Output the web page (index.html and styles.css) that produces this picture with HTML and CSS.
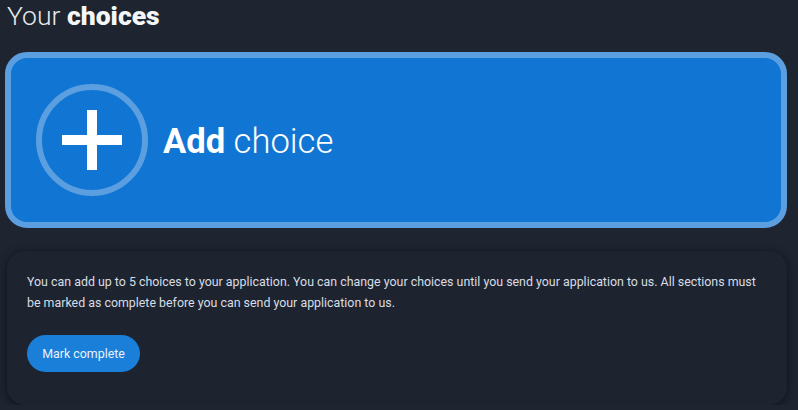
FILE: index.html
```html
<!DOCTYPE html>
<html lang="en">
<head>
<meta charset="utf-8">
<title>Your choices</title>
<link rel="stylesheet" href="styles.css">
</head>
<body>
<main class="page">
  <h1 class="title"><span class="light">Your</span> <strong>choices</strong></h1>
  <button class="add-card" type="button">
    <span class="plus-ring">
      <svg class="plus" viewBox="0 0 60 60" width="60" height="60" aria-hidden="true">
        <rect x="0" y="25" width="60" height="10" fill="#ffffff"/>
        <rect x="25" y="0" width="10" height="60" fill="#ffffff"/>
      </svg>
    </span>
    <span class="add-label"><strong>Add</strong> choice</span>
  </button>
  <section class="info-card">
    <p class="info-text">You can add up to 5 choices to your application. You can change your choices until you send your application to us. All sections must be marked as complete before you can send your application to us.</p>
    <button class="mark-btn" type="button">Mark complete</button>
  </section>
</main>
</body>
</html>
```

FILE: styles.css
```css
html, body {
  margin: 0;
  padding: 0;
  background: #1e2530;
}
body {
  font-family: Roboto, "Noto Sans", "Liberation Sans", sans-serif;
  color: #ffffff;
}
.page {
  display: flex;
  flex-direction: column;
  padding: 0 11px 0 5px;
  width: 782px;
}
.title {
  margin: 0;
  padding: 0 0 0 2px;
  font-size: 26.5px;
  line-height: 31px;
  font-weight: 700;
  color: #f4f6f8;
}
.title .light {
  font-weight: 300;
  color: #e6e9ee;
}
.add-card {
  margin-top: 21px;
  box-sizing: border-box;
  width: 782px;
  height: 176px;
  display: flex;
  align-items: center;
  gap: 15px;
  padding: 0 0 0 25px;
  background: #1176d3;
  border: 6px solid #5b9fe0;
  border-radius: 22px;
  cursor: pointer;
  font-family: inherit;
  text-align: left;
}
.plus-ring {
  box-sizing: border-box;
  width: 112px;
  height: 112px;
  border-radius: 50%;
  border: 6px solid #5b9fe0;
  display: flex;
  align-items: center;
  justify-content: center;
  flex: none;
}
.add-label {
  color: #ffffff;
  font-size: 34.6px;
  font-weight: 300;
  line-height: 40px;
  padding-top: 2px;
}
.add-label strong {
  font-weight: 700;
}
.info-card {
  margin: 23px 0 0 2px;
  box-sizing: border-box;
  width: 780px;
  height: 154px;
  background: #1d2430;
  border-radius: 18px;
  box-shadow: 0 2px 8px rgba(8, 11, 16, 0.75);
  padding: 20px 22px 0 20px;
  display: flex;
  flex-direction: column;
  align-items: flex-start;
}
.info-text {
  margin: 0;
  font-size: 12.4px;
  line-height: 21px;
  color: #d8dde4;
}
.mark-btn {
  margin-top: 22px;
  height: 37px;
  width: 113px;
  border: none;
  border-radius: 19px;
  background: #1a7fd8;
  color: #e8f1fb;
  font-family: inherit;
  font-size: 12.4px;
  padding: 0;
  cursor: pointer;
}
```
